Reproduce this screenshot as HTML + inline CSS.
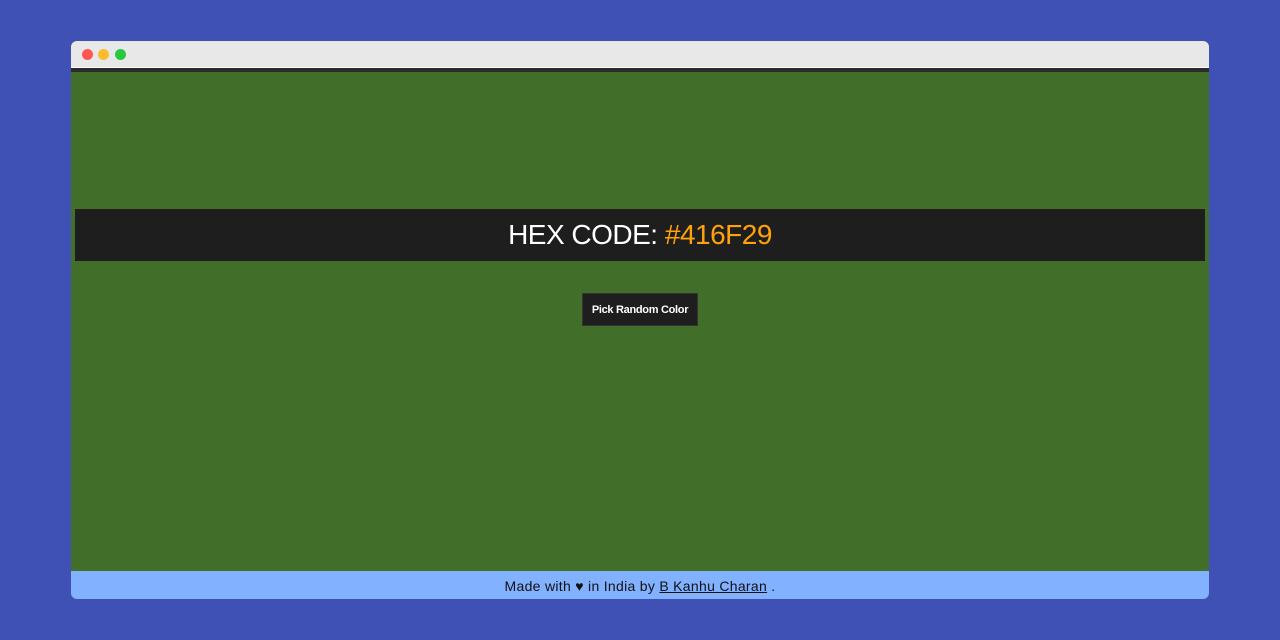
<!DOCTYPE html>
<html><head><style>
body{margin:0;width:1280px;height:640px;background:#3f51b5;position:relative;overflow:hidden;font-family:"Liberation Sans",sans-serif}
.win{position:absolute;left:71px;top:41px;width:1138px;height:558px;border-radius:6px;overflow:hidden;background:#416f29}
.bar{height:26px;background:#e8e8e8;border-bottom:1px solid #fff;position:relative}
.dark{height:4px;background:#2b2b2b}
.d{position:absolute;top:8px;width:11px;height:11px;border-radius:50%}
.hex{position:absolute;left:4px;top:168px;width:1130px;height:52px;background:#1e1e1e;color:#fff;font-size:28px;line-height:52px;text-align:center;letter-spacing:-0.5px}
.hex span{color:#ffa20a}
.btn{position:absolute;left:511px;top:252px;width:114px;height:31px;background:#1e1e1e;border:1px solid #333;color:#fff;font-size:11px;font-weight:bold;line-height:33px;text-align:center;letter-spacing:-0.3px}
.foot{position:absolute;left:0;bottom:0;width:100%;height:28px;background:#82b1ff;color:#111;font-size:14px;line-height:30px;text-align:center;letter-spacing:0.3px}
.foot u{text-decoration:underline}
</style></head><body>
<div class="win">
<div class="bar"><div class="d" style="left:11px;background:#fe5655"></div><div class="d" style="left:27px;background:#fdbb2e"></div><div class="d" style="left:44px;background:#27c93f"></div></div>
<div class="dark"></div>
<div class="hex">HEX CODE: <span>#416F29</span></div>
<div class="btn">Pick Random Color</div>
<div class="foot">Made with ♥ in India by <u>B Kanhu Charan</u> .</div>
</div>
</body></html>
